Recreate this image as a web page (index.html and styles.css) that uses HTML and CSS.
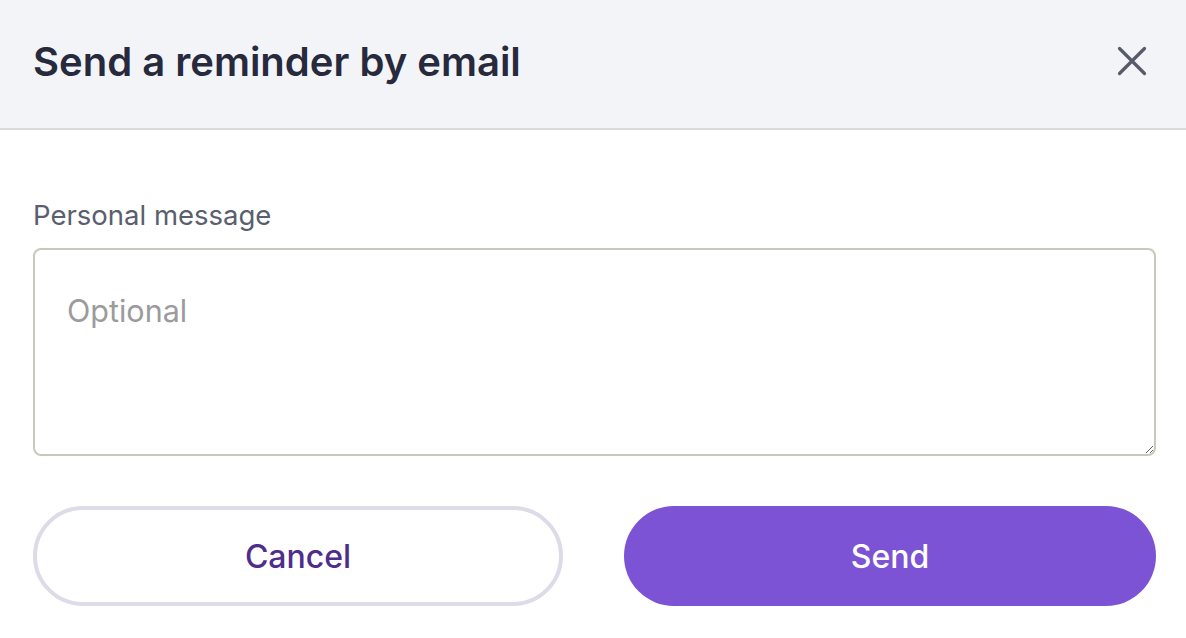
FILE: index.html
```html
<!DOCTYPE html>
<html>
<head>
<meta charset="utf-8">
<link rel="stylesheet" href="styles.css">
</head>
<body>
<div class="modal">
  <header class="modal-header">
    <h1 class="modal-title">Send a reminder by email</h1>
    <button class="close-btn" aria-label="Close">
      <svg width="30" height="30" viewBox="0 0 30 30"><path d="M2.5 2.5L27.5 27.5M27.5 2.5L2.5 27.5" stroke="#575a68" stroke-width="3.2" stroke-linecap="round" fill="none"/></svg>
    </button>
  </header>
  <div class="modal-body">
    <label class="field-label">Personal message</label>
    <textarea class="message" placeholder="Optional"></textarea>
    <div class="actions">
      <button class="btn btn-cancel">Cancel</button>
      <button class="btn btn-send">Send</button>
    </div>
  </div>
</div>
</body>
</html>
```
FILE: styles.css
```css
html, body {
  margin: 0;
  padding: 0;
  background: #ffffff;
  font-family: Inter, "Noto Sans", sans-serif;
}
.modal {
  width: 1186px;
  height: 638px;
  overflow: hidden;
}
.modal-header {
  height: 122px;
  background: #f3f4f8;
  border-bottom: 2px solid #dcdad7;
  display: flex;
  align-items: center;
  justify-content: space-between;
  padding: 0 39px 6px 33px;
}
.modal-title {
  margin: 0;
  font-size: 40px;
  font-weight: 600;
  color: #272a3d;
  letter-spacing: 0;
}
.close-btn {
  border: 0;
  background: none;
  padding: 0;
  width: 30px;
  height: 30px;
  display: flex;
}
.modal-body {
  padding: 70px 30px 0 33px;
  display: flex;
  flex-direction: column;
}
.field-label {
  font-size: 27.5px;
  color: #5b5e6e;
  line-height: 30px;
}
.message {
  margin-top: 18px;
  height: 208px;
  box-sizing: border-box;
  border: 2px solid #c9c8bc;
  border-radius: 8px;
  padding: 42px 32px;
  font-family: Inter, "Noto Sans", sans-serif;
  font-size: 30.5px;
  resize: vertical;
  outline: none;
}
.message::placeholder {
  color: #9b9b9b;
}
.actions {
  margin-top: 50px;
  display: flex;
  gap: 61px;
}
.btn {
  height: 100px;
  border-radius: 50px;
  font-family: Inter, "Noto Sans", sans-serif;
  font-size: 32px;
  font-weight: 500;
  box-sizing: border-box;
}
.btn-cancel {
  width: 530px;
  background: #ffffff;
  border: 4px solid #dddbe8;
  color: #4f2d8c;
}
.btn-send {
  flex: 1;
  background: #7b53d4;
  border: 0;
  color: #ffffff;
}
```
